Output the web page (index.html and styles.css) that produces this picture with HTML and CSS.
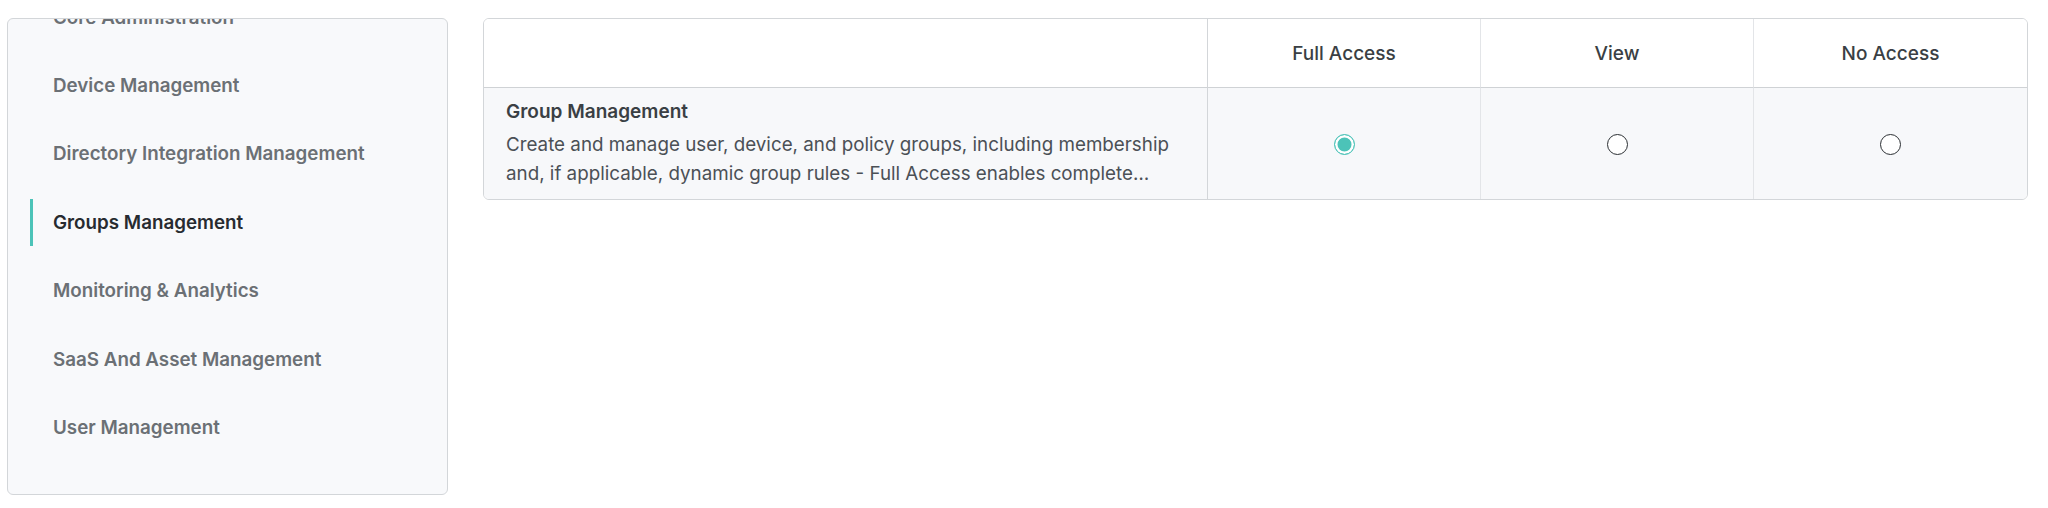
FILE: index.html
```html
<!DOCTYPE html>
<html lang="en">
<head>
<meta charset="utf-8">
<title>Permissions</title>
<link rel="stylesheet" href="styles.css">
</head>
<body>
<div class="page">
  <nav class="sidebar">
    <ul class="nav-list">
      <li class="nav-item">Core Administration</li>
      <li class="nav-item">Device Management</li>
      <li class="nav-item">Directory Integration Management</li>
      <li class="nav-item active">Groups Management</li>
      <li class="nav-item">Monitoring &amp; Analytics</li>
      <li class="nav-item">SaaS And Asset Management</li>
      <li class="nav-item">User Management</li>
    </ul>
  </nav>
  <section class="perm-table">
    <div class="cell head-cell first"></div>
    <div class="cell head-cell">Full Access</div>
    <div class="cell head-cell">View</div>
    <div class="cell head-cell last">No Access</div>

    <div class="cell body-cell first desc-cell">
      <div class="perm-title">Group Management</div>
      <div class="perm-desc">Create and manage user, device, and policy groups, including membership and, if applicable, dynamic group rules - Full Access enables complete control over group creation, editing, and deletion.</div>
    </div>
    <div class="cell body-cell radio-cell"><span class="radio checked"></span></div>
    <div class="cell body-cell radio-cell"><span class="radio"></span></div>
    <div class="cell body-cell radio-cell last"><span class="radio"></span></div>
  </section>
</div>
</body>
</html>
```
FILE: styles.css
```css
* { box-sizing: border-box; }
html, body { margin: 0; padding: 0; background: #ffffff; }
body {
  font-family: Inter, "Noto Sans", "Liberation Sans", sans-serif;
  color: #3b4045;
}
.page {
  display: flex;
  align-items: flex-start;
  gap: 35px;
  padding: 18px 20px 0 7px;
}
.sidebar {
  width: 441px;
  height: 477px;
  flex: none;
  background: #f8f9fb;
  border: 1px solid #d3d6d9;
  border-radius: 6px;
  overflow: hidden;
}
.nav-list {
  list-style: none;
  margin: -36px 0 0 0;
  padding: 0;
}
.nav-item {
  position: relative;
  height: 68.4px;
  display: flex;
  align-items: center;
  padding-left: 45px;
  font-size: 18.8px;
  font-weight: 600;
  color: #6b7075;
}
.nav-item.active { color: #272b30; }
.nav-item.active::before {
  content: "";
  position: absolute;
  left: 22px;
  top: 10.7px;
  width: 3px;
  height: 47px;
  background: #4cc3b8;
}
.perm-table {
  flex: 1;
  display: grid;
  grid-template-columns: 724px 1fr 1fr 1fr;
  grid-template-rows: 69px 111px;
  border: 1px solid #d3d6d9;
  border-radius: 6px;
  overflow: hidden;
}
.cell {
  display: flex;
  align-items: center;
  justify-content: center;
  border-right: 1px solid #e3e5e8;
}
.cell.last { border-right: none; }
.cell.first { border-right: 1px solid #d3d6d9; }
.head-cell {
  background: #ffffff;
  border-bottom: 1px solid #cfd2d5;
  font-size: 19px;
  font-weight: 500;
  color: #3a3f44;
}
.body-cell { background: #f7f8fa; }
.desc-cell {
  flex-direction: column;
  align-items: stretch;
  justify-content: center;
  padding: 8px 28px 10px 22px;
}
.perm-title {
  font-size: 19px;
  font-weight: 600;
  line-height: 28px;
  margin-bottom: 4px;
  color: #3a3f44;
}
.perm-desc {
  font-size: 18.8px;
  line-height: 29px;
  color: #4b5056;
  display: -webkit-box;
  -webkit-box-orient: vertical;
  -webkit-line-clamp: 2;
  overflow: hidden;
}
.radio {
  width: 21px;
  height: 21px;
  border-radius: 50%;
  border: 1.4px solid #2b2f33;
  background: #ffffff;
  margin-top: 1px;
}
.radio.checked {
  border: 1.5px solid #4cc3b8;
  background: #4cc3b8;
  box-shadow: inset 0 0 0 2.5px #ffffff;
}
```
